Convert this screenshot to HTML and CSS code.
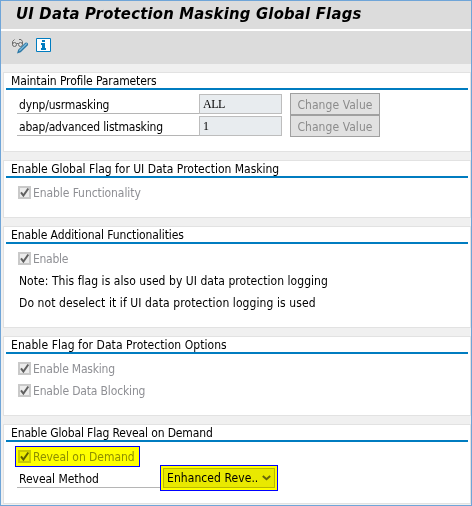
FILE: index.html
```
<!DOCTYPE html>
<html lang="en">
<head>
    <meta charset="utf-8" />
    <title>UI Data Protection Masking Global Flags</title>
    <link rel="stylesheet" href="styles.css">
</head>
<body>
    <svg class="defs" width="0" height="0">
        <symbol id="check" viewBox="0 0 13 13">
            <path d="M0 0h13v13H0z" fill="#c9c9c9" />
            <path d="M2 2h9v9H2z" fill="#ececec" />
            <path d="M3 6.3L5.4 9.5L10.3 2.5" fill="none" stroke="#606060" stroke-width="2" />
        </symbol>
    </svg>
    <div class="window">
        <h1 class="title"><span>UI Data Protection Masking Global Flags</span></h1>
        <div class="toolbar">
            <svg width="18" height="16" viewBox="0 0 18 16">
                <g fill="none" stroke="#6b6b6b" stroke-width="1">
                    <circle cx="2.5" cy="6.5" r="2" />
                    <circle cx="8.5" cy="6.5" r="2" />
                    <path d="M.5 6.5V3.5L2.5 1.5M4.5 5.5h2M7 1.5H9L10.5 3.5V6.5" />
                </g>
                <path d="M5 15.5L6.2 11.7L13.3 4.8Q14.4 4 15.6 5Q16.7 6.2 15.6 7.4L8.7 14.2z" fill="#2b78a6" />
                <path d="M7.3 12.7L14.8 5.5" stroke="#7fbbdd" stroke-width="1.3" />
            </svg>
            <svg width="15" height="14" viewBox="0 0 15 14">
                <path d="M.5 .5h14v13H.5z" fill="#fff" stroke="#007cc0" />
                <path d="M6 2h3v2H6zM5 5h4v5h1v2H5v-2h1V7H5z" fill="#007cc0" />
            </svg>
        </div>
        <div class="content">
            <div class="panel">
                <h2 class="heading"><span class="h-profile">Maintain Profile Parameters</span></h2>
                <div class="row">
                    <div class="label"><span class="t-dynp">dynp/usrmasking</span></div>
                    <div class="field">ALL</div>
                    <button class="btn" disabled>Change Value</button>
                </div>
                <div class="row">
                    <div class="label"><span class="t-abap">abap/advanced listmasking</span></div>
                    <div class="field">1</div>
                    <button class="btn" disabled>Change Value</button>
                </div>
            </div>
            <div class="panel short">
                <h2 class="heading"><span class="h-global">Enable Global Flag for UI Data Protection Masking</span></h2>
                <div class="row check">
                    <svg width="13" height="13"><use href="#check" /></svg>
                    <span class="t-func">Enable Functionality</span>
                </div>
            </div>
            <div class="panel tall">
                <h2 class="heading"><span class="h-additional">Enable Additional Functionalities</span></h2>
                <div class="row check">
                    <svg width="13" height="13"><use href="#check" /></svg>
                    <span class="t-enable">Enable</span>
                </div>
                <div class="row note"><span class="t-note">Note: This flag is also used by UI data protection logging</span></div>
                <div class="row note"><span class="t-deselect">Do not deselect it if UI data protection logging is used</span></div>
            </div>
            <div class="panel">
                <h2 class="heading"><span class="h-options">Enable Flag for Data Protection Options</span></h2>
                <div class="row check">
                    <svg width="13" height="13"><use href="#check" /></svg>
                    <span class="t-masking">Enable Masking</span>
                </div>
                <div class="row check">
                    <svg width="13" height="13"><use href="#check" /></svg>
                    <span class="t-blocking">Enable Data Blocking</span>
                </div>
            </div>
            <div class="panel">
                <h2 class="heading"><span class="h-reveal">Enable Global Flag Reveal on Demand</span></h2>
                <div class="row">
                    <div class="check marked">
                        <svg width="13" height="13"><use href="#check" /></svg>
                        <span class="t-reveal">Reveal on Demand</span>
                    </div>
                </div>
                <div class="row method">
                    <div class="label"><span class="t-method">Reveal Method</span></div>
                    <div class="select-mark">
                        <div class="select">
                            <span class="t-enhanced">Enhanced Reve..</span>
                            <svg width="9" height="6" viewBox="0 0 9 6">
                                <path d="M.8 1L4.5 4.2L8.2 1" fill="none" stroke="#66660a" stroke-width="2" />
                            </svg>
                        </div>
                    </div>
                </div>
            </div>
        </div>
    </div>
</body>
</html>
```
FILE: styles.css
```
* {
    box-sizing: border-box;
}
body {
    margin: 0;
    font: 12px "DejaVu Sans Condensed", "DejaVu Sans", sans-serif;
    font-stretch: condensed;
    letter-spacing: -0.1px;
    color: #000;
}
.defs {
    display: none;
}
.window {
    width: 472px;
    height: 506px;
    border: 1px solid #6fa5d8;
    background: #f0f0f0;
}
.title {
    height: 30px;
    margin: 0;
    padding-left: 15px;
    background: #dcdcdc;
    border-bottom: 2px solid #fff;
    font: italic bold 16.5px/25px "DejaVu Sans Condensed", "DejaVu Sans", sans-serif;
    font-stretch: condensed;
    letter-spacing: 0.21px;
    white-space: nowrap;
}
.toolbar {
    display: flex;
    gap: 6px;
    height: 33px;
    padding: 7px 0 0 11px;
    background: #dcdcdc;
}
.content {
    display: flex;
    flex-direction: column;
    gap: 8px;
    padding: 8px 0 0 2px;
}
.panel {
    height: 80px;
    border: 1px solid #e2e2e2;
    background: #fff;
    padding: 0 2px;
}
.short {
    height: 58px;
}
.tall {
    height: 102px;
}
.heading {
    height: 17px;
    margin: 0 0 3px;
    padding-left: 5px;
    border-bottom: 2px solid #007cc0;
    font-size: 12px;
    font-weight: normal;
    line-height: 17px;
    white-space: nowrap;
}
.row {
    display: flex;
    height: 22px;
    padding-left: 11px;
    line-height: 24px;
    white-space: nowrap;
}
.label {
    width: 182px;
    height: 21px;
    padding-left: 2px;
    border-bottom: 1px solid #b5b5b5;
}
.field {
    width: 83px;
    height: 20px;
    margin: 1px 8px 0 0;
    padding-left: 3px;
    border: 1px solid #bdbdbd;
    background: #e8ecef;
    font: 12px/19px "Liberation Serif", serif;
    letter-spacing: -0.5px;
}
.btn {
    width: 90px;
    height: 22px;
    padding: 2px 0 0;
    border: 1px solid #a0a0a0;
    background: #e1e1e1;
    color: #8c8c8c;
    font: inherit;
    line-height: 18px;
    letter-spacing: 0.07px;
}
.check {
    display: flex;
    align-items: center;
    gap: 2px;
    color: #8e8f94;
}
.row.check {
    padding-left: 12px;
}
.row.check span {
    padding-top: 2px;
}
.note {
    padding-left: 13px;
}
.marked {
    width: 125px;
    height: 21px;
    margin: 1px 0 0 -2px;
    padding-left: 2px;
    border: 1px solid #00f;
    background: #ff0;
    color: #8e8f00;
}
.marked svg {
    mix-blend-mode: multiply;
}
.method .label {
    width: 143px;
}
.select-mark {
    width: 118px;
    height: 26px;
    margin-top: -2px;
    padding: 2px;
    border: 1px solid #00f;
    background: #ff0;
}
.select {
    display: flex;
    align-items: center;
    justify-content: space-between;
    height: 20px;
    padding: 0 3px;
    border: 1px solid #b9b900;
    background: #e9e900;
    line-height: 18px;
}

/* letter fitting */
.h-profile {
    letter-spacing: -0.11px;
}
.h-global {
    letter-spacing: -0.01px;
}
.h-additional {
    letter-spacing: -0.09px;
}
.h-options {
    letter-spacing: 0.06px;
}
.h-reveal {
    letter-spacing: -0.14px;
}
.t-dynp,
.t-abap {
    letter-spacing: -0.18px;
}
.t-func {
    letter-spacing: -0.08px;
}
.t-enable {
    letter-spacing: -0.3px;
}
.t-note {
    letter-spacing: 0.05px;
}
.t-deselect {
    letter-spacing: 0.09px;
}
.t-masking {
    letter-spacing: -0.2px;
}
.t-blocking {
    letter-spacing: -0.15px;
}
.t-reveal {
    letter-spacing: -0.05px;
}
.t-method {
    letter-spacing: -0.03px;
}
.t-enhanced {
    letter-spacing: 0.07px;
}
```
